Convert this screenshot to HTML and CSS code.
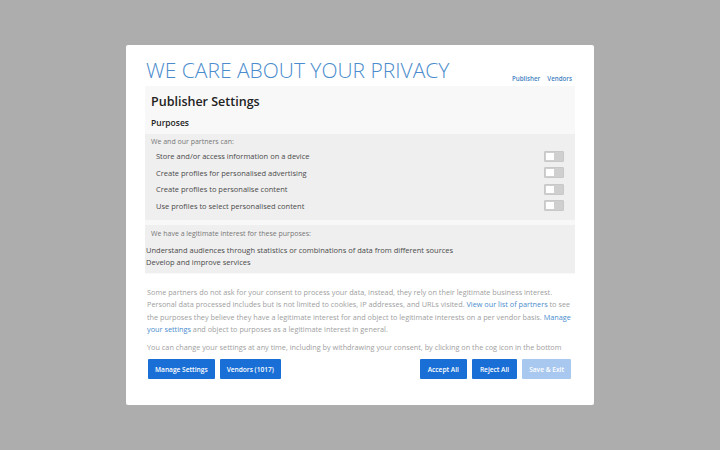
FILE: index.html
```html
<!DOCTYPE html>
<html>
	<head>
		<link rel="stylesheet" href="styles.css">
	</head>
	<body>
		<div class="overlay">
			<div class="consent">
				<div class="consent-head">
					<h1>WE CARE ABOUT YOUR PRIVACY</h1>
					<div class="tabs">
						<a href="#">Publisher</a>
						<a href="#">Vendors</a>
					</div>
				</div>

				<div class="settings">
					<h2>Publisher Settings</h2>
					<h3>Purposes</h3>

					<div class="group">
						<p class="group-title">We and our partners can:</p>
						<div class="purpose">
							<span>Store and/or access information on a device</span>
							<span class="toggle"></span>
						</div>
						<div class="purpose">
							<span>Create profiles for personalised advertising</span>
							<span class="toggle"></span>
						</div>
						<div class="purpose">
							<span>Create profiles to personalise content</span>
							<span class="toggle"></span>
						</div>
						<div class="purpose">
							<span>Use profiles to select personalised content</span>
							<span class="toggle"></span>
						</div>
					</div>

					<div class="group legit">
						<p class="group-title">We have a legitimate interest for these purposes:</p>
						<p class="legit-item">Understand audiences through statistics or combinations of data from different sources</p>
						<p class="legit-item">Develop and improve services</p>
					</div>
				</div>

				<div class="info">
					<p>Some partners do not ask for your consent to process your data, instead, they rely on their legitimate business interest. Personal data processed includes but is not limited to cookies, IP addresses, and URLs visited. <a href="#">View our list of partners</a> to see the purposes they believe they have a legitimate interest for and object to legitimate interests on a per vendor basis. <a href="#">Manage your settings</a> and object to purposes as a legitimate interest in general.</p>
					<p>You can change your settings at any time, including by withdrawing your consent, by clicking on the cog icon in the bottom right corner of the screen, and you can find more details in our privacy policy.</p>
				</div>

				<div class="actions">
					<div class="btn-group">
						<button class="btn">Manage Settings</button>
						<button class="btn">Vendors (1017)</button>
					</div>
					<div class="btn-group right">
						<button class="btn">Accept All</button>
						<button class="btn">Reject All</button>
						<button class="btn disabled">Save &amp; Exit</button>
					</div>
				</div>
			</div>
		</div>
	</body>
</html>
```

FILE: styles.css
```css
body {
	margin: 0;
	font-family: "Open Sans", "DejaVu Sans", sans-serif;
	background-color: #adadad;
}

.overlay {
	width: 720px;
	height: 450px;
	display: flex;
	align-items: center;
	justify-content: center;
}

.consent {
	width: 468px;
	height: 360px;
	box-sizing: border-box;
	padding: 11px 19px 0 19px;
	background-color: #ffffff;
	border-radius: 2px;
}

.consent-head {
	display: flex;
	justify-content: space-between;
	align-items: flex-end;
}

.consent-head h1 {
	margin: 0 0 0 1px;
	font-size: 21px;
	font-weight: 300;
	line-height: 28px;
	color: #4a8ccd;
}

.tabs {
	margin-bottom: -2px;
	margin-right: 3px;
}

.tabs a {
	margin-left: 3px;
	font-size: 6.2px;
	font-weight: 600;
	color: #3f7fc0;
	text-decoration: none;
}

.settings {
	margin-top: 2px;
	padding: 4px 0 1px 0;
	background-color: #f8f8f8;
}

.settings h2 {
	margin: 0 6px;
	font-size: 12.5px;
	font-weight: 600;
	line-height: 24px;
	color: #222222;
}

.settings h3 {
	margin: 0 6px;
	font-size: 8.5px;
	font-weight: 600;
	line-height: 17px;
	color: #222222;
}

.group {
	margin-top: 3px;
	padding: 2px 0 6px 0;
	background-color: #efefef;
}

.group-title {
	margin: 0 6px;
	font-size: 7px;
	line-height: 12px;
	color: #777777;
}

.purpose {
	display: flex;
	justify-content: space-between;
	align-items: center;
	height: 16.5px;
	margin: 0 11px 0 11px;
	font-size: 7.5px;
	color: #4a4a4a;
}

.toggle {
	width: 20px;
	height: 11px;
	box-sizing: border-box;
	border: 1px solid #c8c8c8;
	background-color: #cfcfcf;
	border-radius: 1px;
	position: relative;
}

.toggle::before {
	content: "";
	position: absolute;
	left: 1px;
	top: 1px;
	width: 8px;
	height: 7px;
	background-color: #ffffff;
}

.legit {
	margin-top: 5px;
	padding: 3px 0 5px 0;
}

.legit .group-title {
	margin-bottom: 4px;
}

.legit-item {
	margin: 0 1px;
	font-size: 7.5px;
	line-height: 12px;
	color: #4a4a4a;
}

.info {
	height: 67px;
	overflow: hidden;
	margin-top: 12px;
	padding: 0 2px;
}

.info p {
	margin: 0 0 6px 0;
	font-size: 7.3px;
	line-height: 12.3px;
	color: #a0a0a0;
}

.info a {
	color: #4a8ccd;
	text-decoration: none;
}

.actions {
	display: flex;
	justify-content: space-between;
	margin-top: 6px;
	padding: 0 4px 0 3px;
}

.btn-group {
	display: flex;
	gap: 5px;
}

.btn {
	height: 20px;
	padding: 0 7px;
	border: none;
	border-radius: 1px;
	background-color: #1a6fd6;
	color: #ffffff;
	font-family: "Open Sans", "DejaVu Sans", sans-serif;
	font-size: 6.6px;
	font-weight: 600;
}

.right .btn {
	padding: 0 8px;
}

.right .btn.disabled {
	padding: 0 7px;
	background-color: #a9c8ef;
}
```
